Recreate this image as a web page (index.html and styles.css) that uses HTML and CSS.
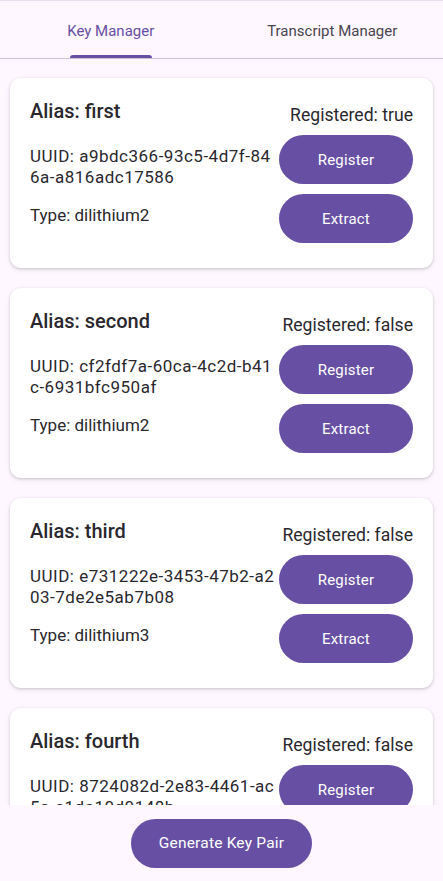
FILE: index.html
```html
<!DOCTYPE html>
<html lang="en">
<head>
<meta charset="utf-8">
<title>Key Manager</title>
<link rel="stylesheet" href="styles.css">
</head>
<body>
<div class="app">
  <nav class="tabs">
    <div class="tab tab-active">
      <span class="tab-label">Key Manager</span>
      <span class="tab-indicator"></span>
    </div>
    <div class="tab">
      <span class="tab-label">Transcript Manager</span>
      <span class="tab-indicator tab-indicator-hidden"></span>
    </div>
  </nav>

  <main class="list">
    <section class="card">
      <div class="card-info">
        <div class="alias">Alias: first</div>
        <div class="uuid"><span class="uuid-line">UUID: a9bdc366-93c5-4d7f-84</span><span class="uuid-line">6a-a816adc17586</span></div>
        <div class="type">Type: dilithium2</div>
      </div>
      <div class="card-actions">
        <div class="registered">Registered: true</div>
        <button class="btn btn-register">Register</button>
        <button class="btn btn-extract">Extract</button>
      </div>
    </section>

    <section class="card">
      <div class="card-info">
        <div class="alias">Alias: second</div>
        <div class="uuid"><span class="uuid-line">UUID: cf2fdf7a-60ca-4c2d-b41</span><span class="uuid-line">c-6931bfc950af</span></div>
        <div class="type">Type: dilithium2</div>
      </div>
      <div class="card-actions">
        <div class="registered">Registered: false</div>
        <button class="btn btn-register">Register</button>
        <button class="btn btn-extract">Extract</button>
      </div>
    </section>

    <section class="card">
      <div class="card-info">
        <div class="alias">Alias: third</div>
        <div class="uuid"><span class="uuid-line">UUID: e731222e-3453-47b2-a2</span><span class="uuid-line">03-7de2e5ab7b08</span></div>
        <div class="type">Type: dilithium3</div>
      </div>
      <div class="card-actions">
        <div class="registered">Registered: false</div>
        <button class="btn btn-register">Register</button>
        <button class="btn btn-extract">Extract</button>
      </div>
    </section>

    <section class="card">
      <div class="card-info">
        <div class="alias">Alias: fourth</div>
        <div class="uuid"><span class="uuid-line">UUID: 8724082d-2e83-4461-ac</span><span class="uuid-line">5a-e1da10d0148b</span></div>
        <div class="type">Type: dilithium2</div>
      </div>
      <div class="card-actions">
        <div class="registered">Registered: false</div>
        <button class="btn btn-register">Register</button>
        <button class="btn btn-extract">Extract</button>
      </div>
    </section>
  </main>

  <footer class="bottom-bar">
    <button class="btn btn-generate">Generate Key Pair</button>
  </footer>
</div>
</body>
</html>
```

FILE: styles.css
```css
* {
  box-sizing: border-box;
}

html, body {
  margin: 0;
  padding: 0;
  height: 100%;
}

body {
  background: #fef7ff;
  font-family: Roboto, "Noto Sans", "Liberation Sans", sans-serif;
  color: #1d1b20;
}

.app {
  display: flex;
  flex-direction: column;
  height: 881px;
  overflow: hidden;
}

/* Tabs */
.tabs {
  display: flex;
  flex: 0 0 auto;
  height: 59px;
  border-top: 1px solid #e8dff1;
  border-bottom: 1px solid #cac4d0;
  background: #fef7ff;
}

.tab {
  flex: 1 1 0;
  display: flex;
  flex-direction: column;
  align-items: center;
  justify-content: space-between;
  padding-top: 20px;
}

.tab-label {
  font-size: 15px;
  line-height: 20px;
  color: #49454f;
  white-space: nowrap;
}

.tab-active .tab-label {
  color: #6750a4;
}

.tab-indicator {
  display: block;
  width: 82px;
  height: 3px;
  border-radius: 3px 3px 0 0;
  background: #6750a4;
}

.tab-indicator-hidden {
  visibility: hidden;
}

/* List */
.list {
  flex: 1 1 auto;
  min-height: 0;
  overflow: hidden;
  display: flex;
  flex-direction: column;
  gap: 20px;
  padding: 19px 10px 0;
}

.card {
  flex: 0 0 auto;
  display: flex;
  align-items: flex-start;
  background: #ffffff;
  border-radius: 11px;
  padding: 19px 20px 25px;
  box-shadow: 0 1px 3px rgba(0, 0, 0, 0.18), 0 2px 6px rgba(0, 0, 0, 0.06);
}

.card-info {
  flex: 1 1 auto;
  min-width: 0;
  display: flex;
  flex-direction: column;
}

.alias {
  font-size: 20px;
  line-height: 28px;
  font-weight: 500;
  color: #2a282e;
}

.uuid {
  margin-top: 21px;
  font-size: 17px;
  line-height: 21px;
  letter-spacing: 0.5px;
  color: #2a282e;
}

.uuid-line {
  display: block;
  white-space: nowrap;
}

.type {
  margin-top: 15px;
  font-size: 17px;
  line-height: 24px;
  color: #2a282e;
}

.card-actions {
  flex: 0 0 134px;
  display: flex;
  flex-direction: column;
  align-items: stretch;
}

.registered {
  margin-top: 6px;
  font-size: 17.6px;
  line-height: 24px;
  text-align: right;
  white-space: nowrap;
  color: #2a282e;
}

.btn {
  display: flex;
  align-items: center;
  justify-content: center;
  border: none;
  background: #6750a4;
  color: #ffffff;
  font-family: Roboto, "Noto Sans", "Liberation Sans", sans-serif;
  font-size: 15px;
  font-weight: 400;
  letter-spacing: 0.2px;
  height: 49px;
  border-radius: 25px;
  padding: 0;
  cursor: pointer;
}

.btn-register {
  margin-top: 8px;
}

.btn-extract {
  margin-top: 10px;
}

/* Bottom bar */
.bottom-bar {
  flex: 0 0 76px;
  display: flex;
  align-items: center;
  justify-content: center;
  background: #fef7ff;
}

.btn-generate {
  width: 181px;
  font-size: 15.5px;
}
```
